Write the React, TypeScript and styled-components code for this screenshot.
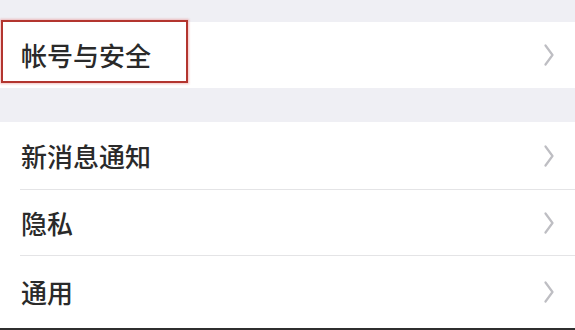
import styled, { createGlobalStyle } from "styled-components";

const GlobalStyle = createGlobalStyle`
  html, body {
    margin: 0;
    padding: 0;
    background: #efeff4;
  }
  body {
    font-family: "Noto Sans CJK SC", "Noto Sans", sans-serif;
  }
`;

const Page = styled.div`
  width: 575px;
  height: 330px;
  overflow: hidden;
  display: flex;
  flex-direction: column;
  background: #efeff4;
  padding-top: 22px;
  box-sizing: border-box;
`;

const Group = styled.div<{ $gap?: number }>`
  background: #ffffff;
  display: flex;
  flex-direction: column;
  margin-top: ${(p) => p.$gap ?? 0}px;
`;

const Row = styled.div<{ $height: number; $last?: boolean }>`
  position: relative;
  height: ${(p) => p.$height}px;
  display: flex;
  align-items: center;
  justify-content: space-between;
  padding: 0 21px 0 21px;
  box-sizing: border-box;

  &::after {
    content: "";
    display: ${(p) => (p.$last ? "none" : "block")};
    position: absolute;
    left: 20px;
    right: 0;
    bottom: 0;
    height: 1px;
    background: #e4e4e6;
  }
`;

const Label = styled.span`
  font-size: 26px;
  font-weight: 500;
  line-height: 1;
  color: #2a2a2a;
  letter-spacing: 0;
`;

const Highlight = styled.div`
  position: absolute;
  left: 1px;
  top: -2px;
  width: 187px;
  height: 63px;
  box-sizing: border-box;
  border: 2px solid #b3352f;
  box-shadow: 0 0 2px 1px rgba(230, 120, 120, 0.45);
  pointer-events: none;
`;

const BottomBar = styled.div`
  height: 2px;
  background: #2f2f2f;
`;

const Chevron = () => (
  <svg width="10" height="22" viewBox="0 0 10 22">
    <polyline
      points="1.5,1.5 8.5,11 1.5,20.5"
      fill="none"
      stroke="#bebec3"
      strokeWidth="2.2"
      strokeLinecap="round"
      strokeLinejoin="round"
    />
  </svg>
);

const settings = [
  { label: "新消息通知", height: 68 },
  { label: "隐私", height: 66 },
  { label: "通用", height: 72 },
];

export default function App() {
  return (
    <>
      <GlobalStyle />
      <Page>
        <Group>
          <Row $height={66} $last>
            <Highlight />
            <Label>帐号与安全</Label>
            <Chevron />
          </Row>
        </Group>
        <Group $gap={34}>
          {settings.map((s, i) => (
            <Row key={s.label} $height={s.height} $last={i === settings.length - 1}>
              <Label>{s.label}</Label>
              <Chevron />
            </Row>
          ))}
        </Group>
        <BottomBar />
      </Page>
    </>
  );
}
